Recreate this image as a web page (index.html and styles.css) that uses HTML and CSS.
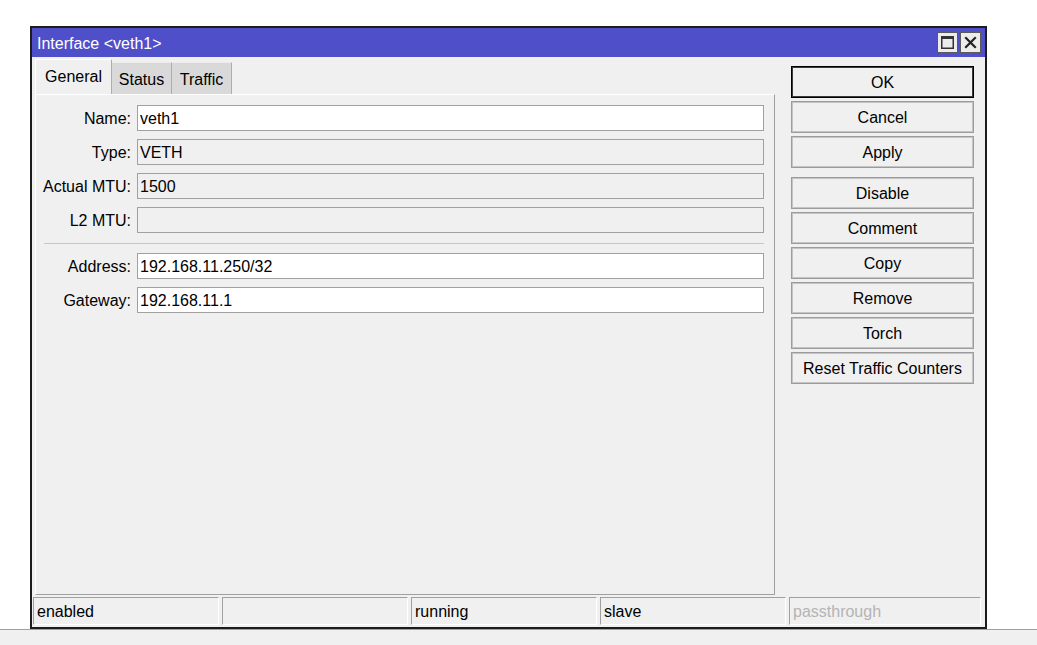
FILE: index.html
```html
<!DOCTYPE html>
<html>
<head>
<meta charset="utf-8">
<title>Interface &lt;veth1&gt;</title>
<link rel="stylesheet" href="styles.css">
</head>
<body>
<div class="desktop">
  <div class="window">
    <div class="titlebar">
      <span class="title">Interface &lt;veth1&gt;</span>
      <div class="title-buttons">
        <div class="tbtn">
          <svg width="19" height="19" viewBox="0 0 19 19"><rect x="3.75" y="3.75" width="11.5" height="11.5" fill="none" stroke="#333" stroke-width="1.5"/><rect x="3" y="3" width="13" height="3" fill="#333"/></svg>
        </div>
        <div class="tbtn">
          <svg width="19" height="19" viewBox="0 0 19 19"><path d="M5 5 L14 14 M14 5 L5 14" stroke="#222" stroke-width="2.2" stroke-linecap="square"/></svg>
        </div>
      </div>
    </div>
    <div class="body">
      <div class="main">
        <div class="tabs">
          <div class="tab active tab-general">General</div>
          <div class="tab tab-status">Status</div>
          <div class="tab tab-traffic">Traffic</div>
        </div>
        <div class="panel">
          <div class="row"><label class="lbl">Name:</label><div class="field edit">veth1</div></div>
          <div class="row"><label class="lbl">Type:</label><div class="field ro">VETH</div></div>
          <div class="row"><label class="lbl">Actual MTU:</label><div class="field ro">1500</div></div>
          <div class="row"><label class="lbl">L2 MTU:</label><div class="field ro"></div></div>
          <div class="sep"></div>
          <div class="row"><label class="lbl">Address:</label><div class="field edit">192.168.11.250/32</div></div>
          <div class="row"><label class="lbl">Gateway:</label><div class="field edit">192.168.11.1</div></div>
        </div>
      </div>
      <div class="actions">
        <div class="btn default">OK</div>
        <div class="btn">Cancel</div>
        <div class="btn">Apply</div>
        <div class="btn group-start">Disable</div>
        <div class="btn">Comment</div>
        <div class="btn">Copy</div>
        <div class="btn">Remove</div>
        <div class="btn">Torch</div>
        <div class="btn">Reset Traffic Counters</div>
      </div>
    </div>
    <div class="statusbar">
      <div class="cell">enabled</div>
      <div class="cell"></div>
      <div class="cell">running</div>
      <div class="cell">slave</div>
      <div class="cell last disabled">passthrough</div>
    </div>
  </div>
</div>
<div class="band"></div>
</body>
</html>
```

FILE: styles.css
```css
* { box-sizing: border-box; }

html, body {
  margin: 0;
  padding: 0;
}

body {
  background: #ffffff;
  font-family: "Liberation Sans", Arial, sans-serif;
  font-size: 16px;
  color: #000;
  width: 1037px;
  height: 645px;
  overflow: hidden;
}

.desktop {
  height: 629px;
  padding: 26px 0 0 30px;
}

.window {
  width: 957px;
  height: 603px;
  border: 2px solid #1c1c1c;
  background: #f0f0f0;
  display: flex;
  flex-direction: column;
}

.titlebar {
  height: 29px;
  background: #4f50c9;
  color: #fff;
  display: flex;
  align-items: center;
  padding-left: 5px;
  flex: none;
}

.title {
  line-height: 26px;
  padding-top: 3px;
}

.title-buttons {
  margin-left: auto;
  margin-right: 4px;
  display: flex;
  gap: 2px;
}

.tbtn {
  width: 21px;
  height: 21px;
  background: #ececec;
  border: 1px solid #5a5a5a;
  display: flex;
  align-items: center;
  justify-content: center;
}

.tbtn svg { display: block; }

.body {
  height: 540px;
  display: flex;
  padding: 2px 11px 2px 3px;
  flex: none;
}

.main {
  width: 740px;
  display: flex;
  flex-direction: column;
}

.tabs {
  height: 35px;
  display: flex;
  align-items: flex-end;
}

.tab {
  height: 32px;
  background: #d9d9d9;
  border-top: 1px solid #ececec;
  border-right: 1px solid #adadad;
  text-align: center;
  line-height: 29px;
  padding-top: 2px;
}

.tab.active {
  height: 35px;
  background: #f0f0f0;
  border-top: 1px solid #ffffff;
  border-left: 1px solid #ffffff;
  border-right: 1px solid #adadad;
  line-height: 32px;
  padding-top: 1px;
}

.tab-general { width: 77px; }
.tab-status { width: 60px; }
.tab-traffic { width: 60px; }

.panel {
  height: 501px;
  border-top: 1px solid #ffffff;
  border-left: 1px solid #ffffff;
  border-right: 1px solid #a0a0a0;
  border-bottom: 1px solid #a0a0a0;
  padding: 10px 10px 0 0;
  display: flex;
  flex-direction: column;
  gap: 8px;
}

.row {
  height: 26px;
  display: flex;
  align-items: center;
}

.lbl {
  width: 95px;
  margin-right: 6px;
  text-align: right;
  flex: none;
  white-space: nowrap;
  padding-top: 2px;
}

.field {
  flex: 1;
  height: 26px;
  border: 1px solid #a0a0a0;
  padding: 1px 3px 0 2px;
  line-height: 24px;
  white-space: nowrap;
}

.field.edit { background: #ffffff; }
.field.ro { background: #f0f0f0; }

.sep {
  height: 1px;
  background: #c6c6c6;
  margin: 2px 0 1px 8px;
  flex: none;
}

.actions {
  width: 183px;
  margin-left: 16px;
  padding-top: 7px;
  display: flex;
  flex-direction: column;
}

.btn {
  height: 32px;
  margin-bottom: 3px;
  border: 1px solid #9c9c9c;
  box-shadow: inset 0 0 0 1px #c4c4c4;
  background: #f0f0f0;
  text-align: center;
  line-height: 30px;
  padding-top: 1px;
  white-space: nowrap;
}

.btn.default {
  border: 1px solid #000000;
  box-shadow: inset 0 0 0 1px #3c3c3c;
}

.btn.group-start { margin-top: 6px; }

.statusbar {
  height: 28px;
  display: flex;
  gap: 3px;
  padding: 0 4px 0 1px;
  flex: none;
}

.cell {
  width: 186px;
  height: 28px;
  border-top: 1px solid #a0a0a0;
  border-left: 1px solid #a0a0a0;
  border-bottom: 1px solid #ffffff;
  border-right: 1px solid #ffffff;
  padding: 1px 0 0 3px;
  line-height: 26px;
  white-space: nowrap;
}

.cell.last { flex: 1; width: auto; }
.cell.disabled { color: #b4b4b4; }

.band {
  height: 16px;
  border-top: 1px solid #a0a0a0;
  background: #f0f0f0;
}
```
